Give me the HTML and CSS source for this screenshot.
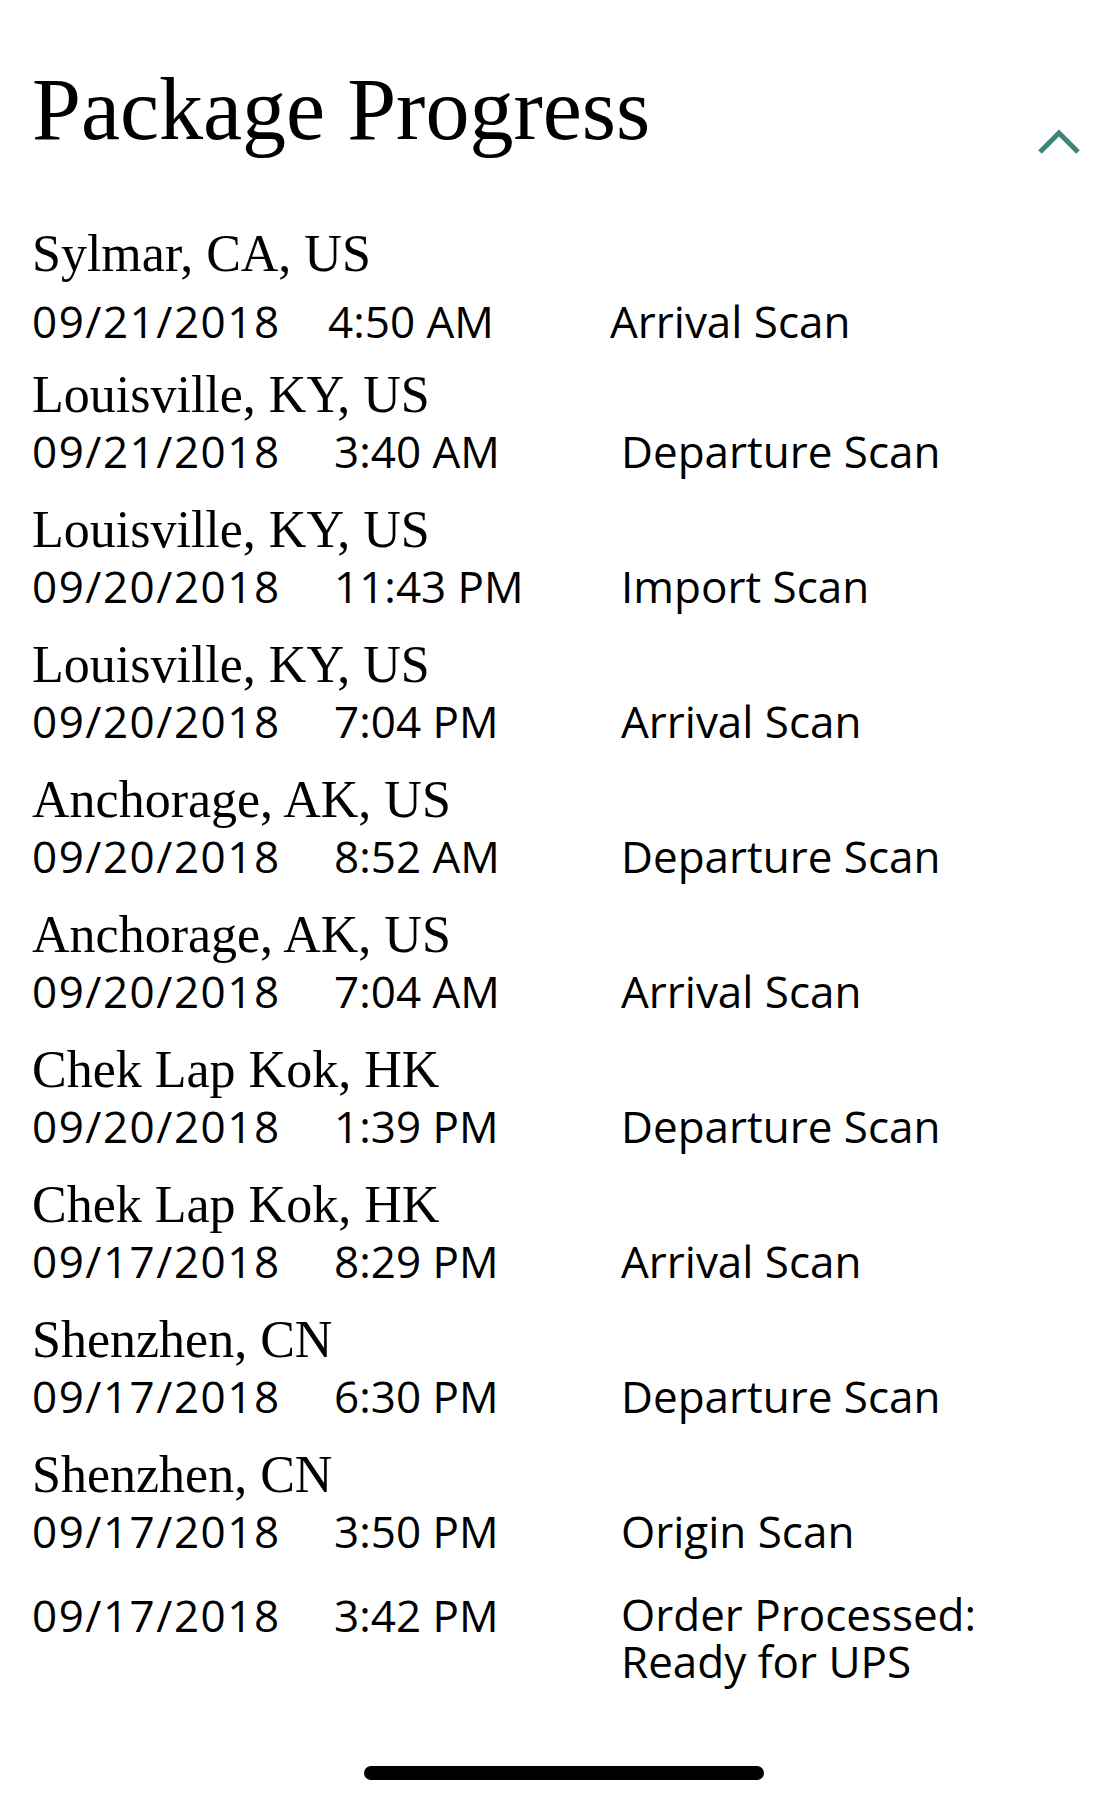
FILE: index.html
```html
<!DOCTYPE html>
<html lang="en">

<head>
    <meta charset="UTF-8">
    <meta name="viewport" content="width=device-width, initial-scale=1.0">
    <title>Package Progress</title>
    <link rel="stylesheet" href="styles.css">
</head>

<body>
    <main class="page">
        <header class="header">
            <h1 class="title">Package Progress</h1>
            <svg class="chevron" width="44" height="26" viewBox="0 0 44 26">
                <path d="M3 23 L22 4 L41 23" fill="none" stroke="#3b8579" stroke-width="5" />
            </svg>
        </header>

        <section class="progress">
            <div class="entry first">
                <div class="location">Sylmar, CA, US</div>
                <div class="row">
                    <span class="date">09/21/2018</span>
                    <span>4:50 AM</span>
                    <span>Arrival Scan</span>
                </div>
            </div>

            <div class="entry">
                <div class="location">Louisville, KY, US</div>
                <div class="row">
                    <span class="date">09/21/2018</span>
                    <span>3:40 AM</span>
                    <span>Departure Scan</span>
                </div>
            </div>

            <div class="entry">
                <div class="location">Louisville, KY, US</div>
                <div class="row">
                    <span class="date">09/20/2018</span>
                    <span>11:43 PM</span>
                    <span>Import Scan</span>
                </div>
            </div>

            <div class="entry">
                <div class="location">Louisville, KY, US</div>
                <div class="row">
                    <span class="date">09/20/2018</span>
                    <span>7:04 PM</span>
                    <span>Arrival Scan</span>
                </div>
            </div>

            <div class="entry">
                <div class="location">Anchorage, AK, US</div>
                <div class="row">
                    <span class="date">09/20/2018</span>
                    <span>8:52 AM</span>
                    <span>Departure Scan</span>
                </div>
            </div>

            <div class="entry">
                <div class="location">Anchorage, AK, US</div>
                <div class="row">
                    <span class="date">09/20/2018</span>
                    <span>7:04 AM</span>
                    <span>Arrival Scan</span>
                </div>
            </div>

            <div class="entry">
                <div class="location">Chek Lap Kok, HK</div>
                <div class="row">
                    <span class="date">09/20/2018</span>
                    <span>1:39 PM</span>
                    <span>Departure Scan</span>
                </div>
            </div>

            <div class="entry">
                <div class="location">Chek Lap Kok, HK</div>
                <div class="row">
                    <span class="date">09/17/2018</span>
                    <span>8:29 PM</span>
                    <span>Arrival Scan</span>
                </div>
            </div>

            <div class="entry">
                <div class="location">Shenzhen, CN</div>
                <div class="row">
                    <span class="date">09/17/2018</span>
                    <span>6:30 PM</span>
                    <span>Departure Scan</span>
                </div>
            </div>

            <div class="entry">
                <div class="location">Shenzhen, CN</div>
                <div class="row">
                    <span class="date">09/17/2018</span>
                    <span>3:50 PM</span>
                    <span>Origin Scan</span>
                </div>
            </div>

            <div class="entry last">
                <div class="row">
                    <span class="date">09/17/2018</span>
                    <span>3:42 PM</span>
                    <span class="event-wrap">Order Processed:<br>Ready for UPS</span>
                </div>
            </div>
        </section>

        <div class="home-bar"></div>
    </main>
</body>

</html>
```

FILE: styles.css
```css
body {
    margin: 0;
    background-color: #fff;
    color: #000;
}

.page {
    height: 1804px;
    padding: 66px 17px 0 32px;
    box-sizing: border-box;
    display: flex;
    flex-direction: column;
}

.header {
    display: flex;
    justify-content: space-between;
    align-items: flex-end;
}

.title {
    margin: 0;
    font-family: "Liberation Serif", "Times New Roman", serif;
    font-weight: normal;
    font-size: 88px;
    line-height: 88px;
}

.chevron {
    margin-bottom: -1px;
}

.progress {
    margin-top: 72px;
    display: flex;
    flex-direction: column;
    gap: 23px;
}

.location {
    font-family: "Liberation Serif", "Times New Roman", serif;
    font-size: 52px;
    line-height: 56px;
}

.row {
    display: grid;
    grid-template-columns: 302px 287px 1fr;
    font-family: "Open Sans", "Noto Sans", sans-serif;
    font-size: 44px;
    line-height: 56px;
}

.date {
    letter-spacing: 1.5px;
}

/* first entry sits a little looser and its columns start earlier */
.entry.first .row {
    margin-top: 11px;
    grid-template-columns: 296px 282px 1fr;
}

.entry.first {
    margin-bottom: -5px;
}

.entry.last {
    margin-top: 5px;
}

.event-wrap {
    line-height: 47px;
    padding-top: 4px;
}

.home-bar {
    margin: auto auto 24px;
    width: 400px;
    height: 14px;
    border-radius: 7px;
    background-color: #000;
    position: relative;
    left: 7px;
}
```
